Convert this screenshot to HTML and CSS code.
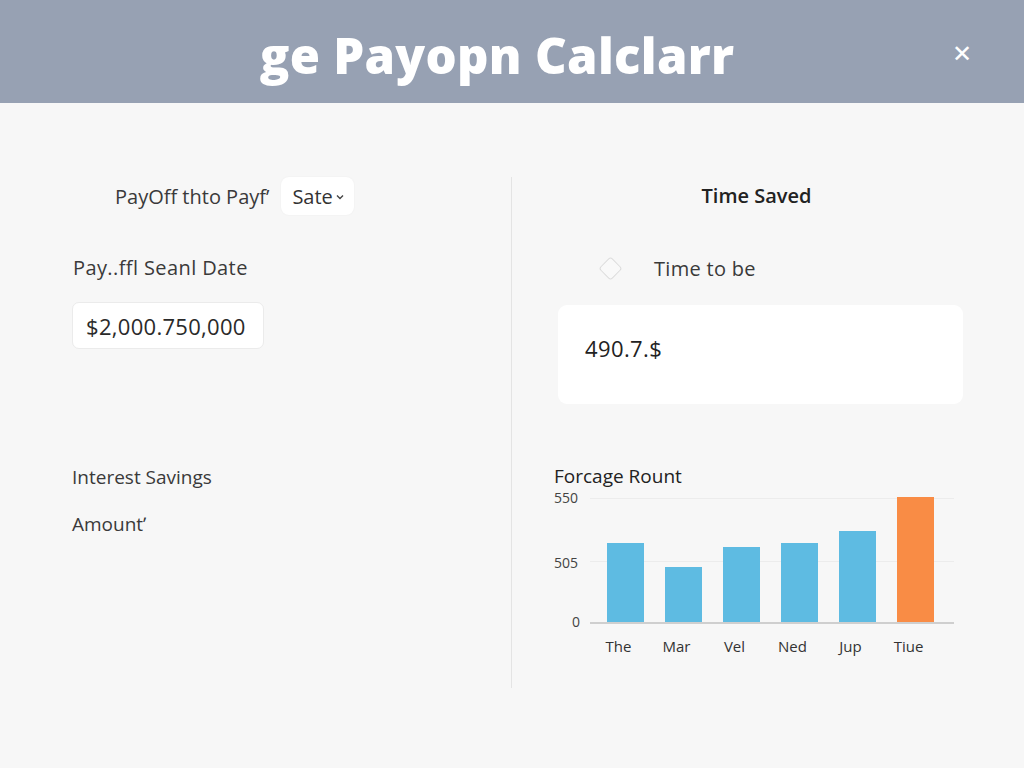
FILE: index.html
```html
<!DOCTYPE html>
<html>
<head>
<meta charset="utf-8">
<link rel="stylesheet" href="styles.css">
</head>
<body>
<header class="topbar">
  <h1 class="title">ge Payopn Calclarr</h1>
  <span class="close">&#x2715;</span>
</header>
<main class="content">
  <section class="col left">
    <div class="row-select">
      <span class="label">PayOff thto Payf&#x02BC;</span>
      <span class="pill">Sate<svg class="chev" width="8" height="6" viewBox="0 0 8 6"><path d="M1 1.5 L4 4.5 L7 1.5" fill="none" stroke="#444" stroke-width="1.4"/></svg></span>
    </div>
    <div class="label field-label">Pay..ffl Seanl Date</div>
    <div class="input">$2,000.750,000</div>
    <div class="label savings">Interest Savings</div>
    <div class="label amount">Amount&#x02BC;</div>
  </section>
  <div class="divider"></div>
  <section class="col right">
    <h2 class="saved">Time Saved</h2>
    <div class="radio-row">
      <span class="diamond"></span>
      <span class="label">Time to be</span>
    </div>
    <div class="result">490.7.$</div>
    <div class="label chart-title">Forcage Rount</div>
    <div class="chart">
      <div class="yaxis">
        <span>550</span>
        <span>505</span>
        <span>0</span>
      </div>
      <div class="plot">
        <div class="grid g1"></div>
        <div class="grid g2"></div>
        <div class="bars">
          <div class="barcol"><div class="bar" style="height:79px"></div><span>The</span></div>
          <div class="barcol"><div class="bar" style="height:55px"></div><span>Mar</span></div>
          <div class="barcol"><div class="bar" style="height:75px"></div><span>Vel</span></div>
          <div class="barcol"><div class="bar" style="height:79px"></div><span>Ned</span></div>
          <div class="barcol"><div class="bar" style="height:91px"></div><span>Jup</span></div>
          <div class="barcol"><div class="bar hot" style="height:125px"></div><span>Tiue</span></div>
        </div>
      </div>
    </div>
  </section>
</main>
</body>
</html>
```
FILE: styles.css
```css
* { box-sizing: border-box; }
html, body { margin: 0; padding: 0; }
body {
  width: 1024px;
  height: 768px;
  background: #f7f7f7;
  font-family: "Open Sans", "Lato", sans-serif;
  color: #333;
  overflow: hidden;
}
.topbar {
  height: 103px;
  background: #97a1b3;
  display: flex;
  align-items: center;
  justify-content: center;
  position: relative;
}
.title {
  margin: 6px 0 0 -30px;
  font-family: "Open Sans", sans-serif;
  font-weight: 800;
  font-size: 49px;
  color: #fff;
  letter-spacing: 0.3px;
}
.close {
  position: absolute;
  right: 52px;
  top: 40px;
  color: #fff;
  font-size: 24px;
  font-family: "DejaVu Sans", sans-serif;
}
.content {
  display: grid;
  grid-template-columns: 511px 2px 511px;
  padding-top: 74px;
}
.divider {
  height: 511px;
  background: #e4e4e4;
  width: 1px;
}
.label {
  font-size: 20px;
  color: #3a3a3a;
}
.left { padding-left: 72px; }
.row-select {
  display: flex;
  align-items: center;
  gap: 12px;
  margin-left: 43px;
  height: 38px;
}
.pill {
  display: inline-flex;
  align-items: center;
  gap: 3px;
  background: #fff;
  border-radius: 8px;
  height: 38px;
  padding: 0 10px 0 11px;
  font-size: 20px;
  color: #333;
  box-shadow: 0 0 2px rgba(0,0,0,0.05);
}
.chev { margin-top: 2px; }
.field-label {
  margin-top: 40px;
  margin-left: 1px;
  line-height: 26px;
  letter-spacing: 0.4px;
}
.input {
  margin-top: 21px;
  width: 192px;
  height: 47px;
  background: #fff;
  border: 1px solid #ebebeb;
  border-radius: 7px;
  font-size: 22px;
  letter-spacing: 0.3px;
  color: #2a2a2a;
  display: flex;
  align-items: center;
  padding-left: 13px;
}
.savings {
  margin-top: 116px;
  font-size: 19px;
  line-height: 24px;
}
.amount {
  margin-top: 23px;
  font-size: 19px;
  line-height: 24px;
}
.right {
  padding-left: 45px;
  padding-right: 61px;
}
.saved {
  margin: 6px 8px 0 0;
  text-align: center;
  font-size: 20px;
  font-weight: 600;
  color: #222;
  line-height: 26px;
}
.radio-row {
  display: flex;
  align-items: center;
  margin-top: 46px;
  padding-left: 44px;
  height: 26px;
}
.diamond {
  width: 17px;
  height: 17px;
  border: 1.5px solid #dcdcdc;
  border-radius: 3px;
  transform: rotate(45deg);
  margin-right: 35px;
  background: #f9f9f9;
}
.radio-row .label { letter-spacing: 0.3px; }
.result {
  margin-top: 24px;
  height: 99px;
  background: #fff;
  border-radius: 9px;
  font-size: 22px;
  letter-spacing: 0.4px;
  color: #222;
  display: flex;
  align-items: center;
  padding-left: 27px;
  padding-bottom: 14px;
}
.chart-title {
  margin-top: 60px;
  margin-left: -4px;
  font-size: 19px;
  color: #222;
  line-height: 24px;
}
.chart {
  display: flex;
  margin-left: -4px;
  margin-top: 2px;
}
.yaxis {
  width: 36px;
  height: 138px;
  display: flex;
  flex-direction: column;
  justify-content: space-between;
  font-size: 14px;
  color: #444;
}
.yaxis span { line-height: 16px; }
.yaxis span:nth-child(2) { margin-top: 6px; }
.yaxis span:last-child { margin-bottom: -2px; padding-left: 18px; }
.plot {
  position: relative;
  width: 364px;
}
.grid {
  position: absolute;
  left: 0;
  right: 0;
  height: 1px;
  background: #ececec;
}
.g1 { top: 8px; }
.g2 { top: 71px; }
.bars {
  display: flex;
  gap: 21px;
  padding-left: 17px;
  height: 134px;
  align-items: flex-end;
  border-bottom: 2px solid #cfcfcf;
  position: relative;
}
.barcol {
  width: 37px;
  position: relative;
  display: flex;
  flex-direction: column;
  align-items: center;
}
.bar {
  width: 37px;
  background: #5ebbe2;
}
.bar.hot { background: #f98c45; }
.barcol span {
  position: absolute;
  top: 100%;
  margin-top: 14px;
  margin-right: 14px;
  font-size: 15px;
  color: #333;
  white-space: nowrap;
}
```
